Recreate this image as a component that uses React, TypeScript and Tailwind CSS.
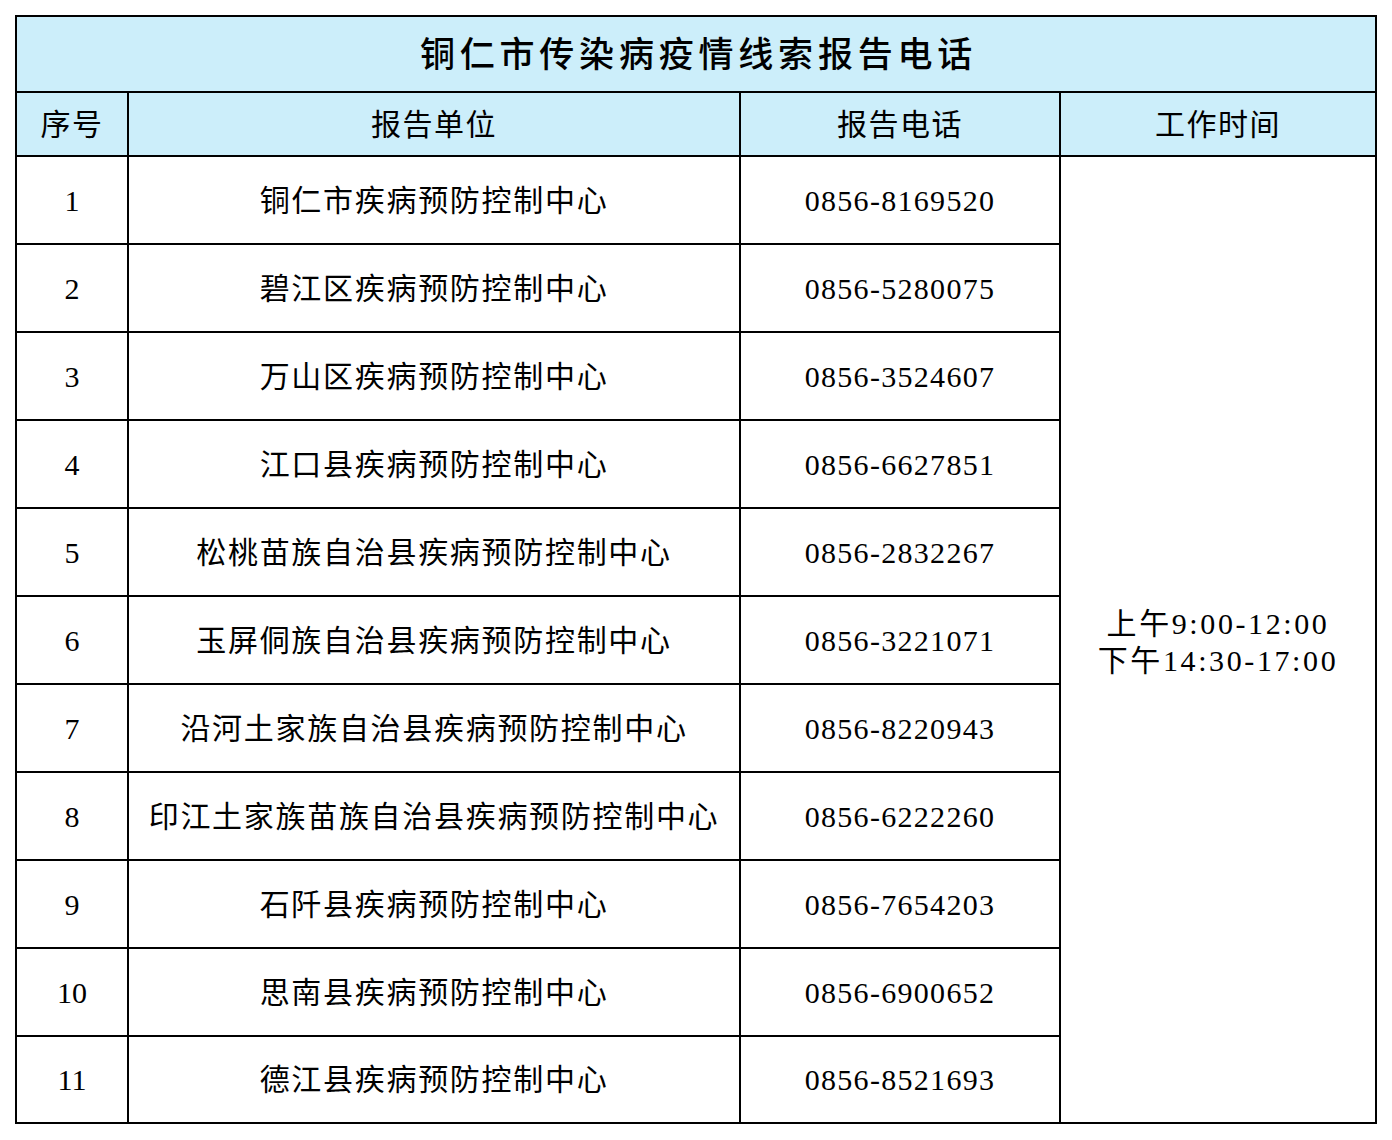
import React from "react";

const rows: [string, string, string][] = [
  ["1", "铜仁市疾病预防控制中心", "0856-8169520"],
  ["2", "碧江区疾病预防控制中心", "0856-5280075"],
  ["3", "万山区疾病预防控制中心", "0856-3524607"],
  ["4", "江口县疾病预防控制中心", "0856-6627851"],
  ["5", "松桃苗族自治县疾病预防控制中心", "0856-2832267"],
  ["6", "玉屏侗族自治县疾病预防控制中心", "0856-3221071"],
  ["7", "沿河土家族自治县疾病预防控制中心", "0856-8220943"],
  ["8", "印江土家族苗族自治县疾病预防控制中心", "0856-6222260"],
  ["9", "石阡县疾病预防控制中心", "0856-7654203"],
  ["10", "思南县疾病预防控制中心", "0856-6900652"],
  ["11", "德江县疾病预防控制中心", "0856-8521693"],
];

export default function App() {
  return (
    <div
      className="w-[1392px] h-[1140px] bg-white pt-[15px] pl-[15px] text-black"
      style={{ fontFamily: '"Liberation Serif", "Noto Sans CJK SC", serif' }}
    >
      <div className="w-[1362px] border-2 border-black">
        <div className="h-[76px] border-b-2 border-black bg-[#cceefa] flex items-center justify-center text-[35px] font-medium tracking-[4.8px] pl-[5px] pt-[4px]">
          铜仁市传染病疫情线索报告电话
        </div>
        <div className="grid grid-cols-[112px_612px_320px_314px] grid-rows-[64px_repeat(10,88px)_85px]">
          <div className="bg-[#cceefa] border-r-2 border-b-2 border-black flex items-center justify-center text-[30px] tracking-[1.5px]">序号</div>
          <div className="bg-[#cceefa] border-r-2 border-b-2 border-black flex items-center justify-center text-[30px] tracking-[1.5px]">报告单位</div>
          <div className="bg-[#cceefa] border-r-2 border-b-2 border-black flex items-center justify-center text-[30px] tracking-[1.5px]">报告电话</div>
          <div className="bg-[#cceefa] border-b-2 border-black flex items-center justify-center text-[30px] tracking-[1.5px]">工作时间</div>
          {rows.map(([n, name, phone], i) => (
            <React.Fragment key={n}>
              <div
                className={
                  i === rows.length - 1
                    ? "border-r-2 border-black flex items-center justify-center text-[30px]"
                    : "border-r-2 border-b-2 border-black flex items-center justify-center text-[30px]"
                }
              >
                {n}
              </div>
              <div
                className={
                  i === rows.length - 1
                    ? "border-r-2 border-black flex items-center justify-center text-[30px] tracking-[1.7px] whitespace-nowrap"
                    : "border-r-2 border-b-2 border-black flex items-center justify-center text-[30px] tracking-[1.7px] whitespace-nowrap"
                }
              >
                {name}
              </div>
              <div
                className={
                  i === rows.length - 1
                    ? "border-r-2 border-black flex items-center justify-center text-[30px] tracking-[1.3px]"
                    : "border-r-2 border-b-2 border-black flex items-center justify-center text-[30px] tracking-[1.3px]"
                }
              >
                {phone}
              </div>
              {i === 0 && (
                <div className="row-span-11 flex flex-col items-center justify-center text-[30px] leading-[37px] tracking-[2.6px] pt-[5px]">
                  <div>上午9:00-12:00</div>
                  <div>下午14:30-17:00</div>
                </div>
              )}
            </React.Fragment>
          ))}
        </div>
      </div>
    </div>
  );
}
